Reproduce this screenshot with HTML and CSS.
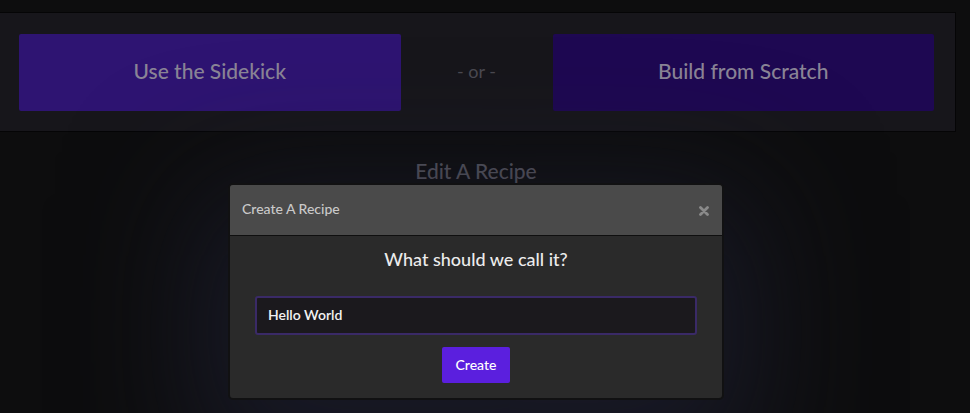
FILE: index.html
```html
<!DOCTYPE html>
<html lang="en">
<head>
<meta charset="utf-8">
<title>Create A Recipe</title>
<link rel="stylesheet" href="styles.css">
</head>
<body>
<div class="page">
  <section class="choice-panel">
    <button class="choice choice-sidekick" type="button">Use the Sidekick</button>
    <span class="choice-or">- or -</span>
    <button class="choice choice-scratch" type="button">Build from Scratch</button>
  </section>
  <h2 class="section-title">Edit A Recipe</h2>
</div>

<div class="modal" role="dialog" aria-labelledby="modal-title">
  <div class="modal-header">
    <h4 class="modal-title" id="modal-title">Create A Recipe</h4>
    <button class="modal-close" type="button" aria-label="Close">
      <svg width="10" height="10" viewBox="0 0 10 10" aria-hidden="true">
        <path d="M1.5 1.5 L8.5 8.5 M8.5 1.5 L1.5 8.5" stroke="#8a8a8a" stroke-width="2.8" stroke-linecap="round"/>
      </svg>
    </button>
  </div>
  <div class="modal-body">
    <p class="modal-question">What should we call it?</p>
    <input class="name-input" type="text" value="Hello World">
    <button class="create-btn" type="button">Create</button>
  </div>
</div>
</body>
</html>
```

FILE: styles.css
```css
* { box-sizing: border-box; }

html, body {
  margin: 0;
  padding: 0;
  height: 100%;
}

body {
  background: #0d0d0e;
  font-family: Lato, "Open Sans", "Noto Sans", sans-serif;
  overflow: hidden;
  position: relative;
}

.page {
  width: 952px;
  padding-top: 12px;
}

.choice-panel {
  margin: 0 0 0 -1px;
  width: 957px;
  height: 120px;
  border: 1px solid #050506;
  background: #17161b;
  display: grid;
  grid-template-columns: 1fr 152px 1fr;
  padding: 21px 21px 20px 19px;
  align-items: stretch;
}

.choice {
  border: 0;
  border-radius: 2px;
  font-family: inherit;
  font-size: 21px;
  font-weight: 500;
  color: #8b8597;
  cursor: pointer;
  padding: 0 0 4px;
}

.choice-sidekick { background: #2e1472; }
.choice-scratch { background: #1e0852; }

.choice-or {
  display: flex;
  align-items: center;
  justify-content: center;
  font-size: 18px;
  color: #4b4a52;
  padding-bottom: 4px;
}

.section-title {
  margin: 26px 0 0;
  text-align: center;
  font-weight: 500;
  font-size: 21px;
  color: #57565f;
}

.modal {
  position: absolute;
  left: 228px;
  top: 183px;
  width: 496px;
  border: 2px solid #111112;
  border-radius: 5px;
  background: #2a2a2a;
  box-shadow: 0 40px 130px 30px rgba(30, 32, 50, 0.7);
  overflow: hidden;
}

.modal-header {
  height: 51px;
  background: #4a4a4a;
  border-bottom: 1px solid #0f0f0f;
  display: flex;
  align-items: center;
  justify-content: space-between;
  padding: 0 13px 4px 12px;
}

.modal-title {
  margin: 0;
  font-size: 14px;
  font-weight: 500;
  color: #c9c9c9;
}

.modal-close {
  border: 0;
  background: none;
  padding: 0;
  width: 10px;
  height: 10px;
  margin-top: 6px;
  display: flex;
}

.modal-body {
  padding: 11px 25px 15px;
  display: flex;
  flex-direction: column;
  align-items: center;
}

.modal-question {
  margin: 0;
  font-size: 18px;
  font-weight: 500;
  line-height: 24px;
  color: #ececec;
}

.name-input {
  margin-top: 25px;
  width: 100%;
  height: 39px;
  border: 2px solid #3a2a67;
  border-radius: 3px;
  background: #1b191d;
  color: #f2f2f2;
  font-family: inherit;
  font-size: 14px;
  font-weight: 600;
  padding: 0 11px 2px;
  outline: none;
}

.create-btn {
  margin-top: 12px;
  width: 68px;
  height: 36px;
  border: 0;
  border-radius: 2px;
  background: #5b1fde;
  color: #ffffff;
  font-family: inherit;
  font-size: 14px;
  font-weight: 500;
  cursor: pointer;
  padding: 0 0 2px;
}
```
